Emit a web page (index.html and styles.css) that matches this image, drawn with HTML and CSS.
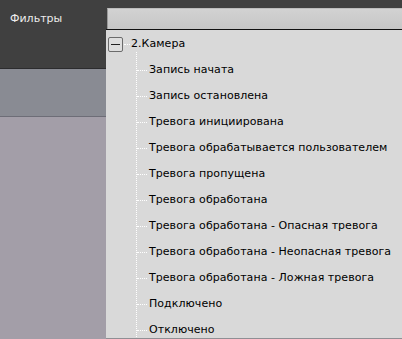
FILE: index.html
```html
<!DOCTYPE html>
<html lang="ru">
<head>
<meta charset="utf-8">
<link rel="stylesheet" href="styles.css">
</head>
<body>
<div class="page">
  <header class="topbar">
    <span class="label">Фильтры</span>
    <div class="input"></div>
  </header>
  <div class="band"></div>
  <div class="content"></div>

  <div class="dropdown">
    <div class="root">
      <span class="toggle"><span class="minus"></span></span>
      <span class="root-link"></span>
      <span class="root-text">2.Камера</span>
    </div>
    <ul class="children">
      <li>Запись начата</li>
      <li>Запись остановлена</li>
      <li>Тревога инициирована</li>
      <li>Тревога обрабатывается пользователем</li>
      <li>Тревога пропущена</li>
      <li>Тревога обработана</li>
      <li>Тревога обработана - Опасная тревога</li>
      <li>Тревога обработана - Неопасная тревога</li>
      <li>Тревога обработана - Ложная тревога</li>
      <li>Подключено</li>
      <li>Отключено</li>
    </ul>
  </div>
</div>
</body>
</html>
```
FILE: styles.css
```css
* { box-sizing: border-box; }
html, body { margin: 0; padding: 0; }
body {
  width: 402px;
  height: 339px;
  overflow: hidden;
  font-family: "DejaVu Sans", Verdana, sans-serif;
  font-size: 11px;
}
.page {
  position: relative;
  width: 402px;
  height: 339px;
  display: flex;
  flex-direction: column;
  background: #a39ea8;
}
.topbar {
  height: 69px;
  background: #404040;
  border-bottom: 1px solid #2c2c2e;
  display: flex;
  align-items: flex-start;
  flex-shrink: 0;
}
.label {
  color: #ececec;
  padding: 12px 0 0 10px;
  line-height: 14px;
}
.input {
  margin-left: auto;
  margin-top: 8px;
  width: 295px;
  height: 22px;
  background: linear-gradient(#d2d2d2, #c6c6c6);
  border-left: 1px solid #9a9a9a;
  border-top: 1px solid #bdbdbd;
  border-bottom: 1px solid #f4f4f4;
}
.band {
  height: 48px;
  background: #898b93;
  border-bottom: 1px solid #6d6d77;
  flex-shrink: 0;
}
.content { flex: 1; }

.dropdown {
  position: absolute;
  left: 106px;
  top: 29px;
  right: 0;
  bottom: 0;
  background: #d9d9d9;
  border-top: 1px solid #111;
  border-bottom: 1px solid #8f8f94;
  padding-top: 1px;
  color: #000;
  overflow: hidden;
  letter-spacing: 0.05px;
}
.root {
  height: 26px;
  display: flex;
  align-items: center;
  padding-left: 2px;
}
.toggle {
  width: 15px;
  height: 15px;
  border: 1px solid #6b6b6b;
  border-radius: 2px;
  background: #dedede;
  display: flex;
  align-items: center;
  justify-content: center;
}
.minus {
  width: 9px;
  height: 1px;
  background: #222;
}
.root-link {
  width: 6px;
  border-top: 1px dotted #fff;
  margin: 0 1px 0 1px;
}
.root-text { line-height: 14px; }

.children {
  list-style: none;
  margin: -5px 0 0 30px;
  padding: 5px 0 0 0;
  border-left: 1px dotted #fff;
}
.children li {
  height: 26px;
  display: flex;
  align-items: center;
  line-height: 14px;
  white-space: nowrap;
}
.children li::before {
  content: "";
  width: 10px;
  border-top: 1px dotted #fff;
  margin-right: 2px;
}
```
